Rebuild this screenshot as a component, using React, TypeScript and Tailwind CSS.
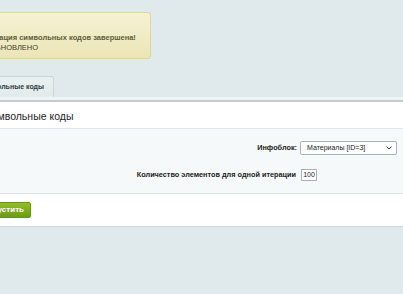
import React from "react";

export default function App() {
  return (
    <div
      className="w-[403px] h-[294px] overflow-hidden bg-[#e0e9eb] flex flex-col"
      style={{ fontFamily: '"Liberation Sans", Arial, sans-serif' }}
    >
      {/* message */}
      <div className="pt-[12px] flex">
        <div className="-ml-[30px] w-[181px] h-[47px] rounded-[3px] border border-[#dcd6a4] bg-gradient-to-b from-[#f5f2d3] to-[#ebe5b6] pt-[20px] overflow-hidden">
          <div className="ml-[7px] whitespace-nowrap text-[7.5px] leading-[10px] font-bold text-[#5f5c3a]">
            Генерация символьных кодов завершена!
          </div>
          <div className="ml-[19px] whitespace-nowrap text-[7.5px] leading-[10px] text-[#3f3d2a]">
            ОБНОВЛЕНО
          </div>
        </div>
      </div>

      {/* tabs */}
      <div className="mt-[17px] flex h-[21px]">
        <div className="-ml-[30px] w-[84px] h-[21px] border-r border-t border-[#cbd4d7] rounded-tr-[3px] bg-gradient-to-b from-[#e9f0f1] to-[#e3eaec] flex items-center justify-end pr-[9px]">
          <span className="whitespace-nowrap text-[7px] font-bold text-[#2f3b42]">
            Символьные коды
          </span>
        </div>
      </div>
      <div className="h-[3px] bg-[#eef3f4]" />
      <div className="h-[2px] bg-[#c3cbce]" />

      {/* panel */}
      <div className="bg-white h-[27px] flex items-center pt-[3px] border-b border-[#dfe6e8]">
        <span className="-ml-[16px] whitespace-nowrap text-[10.5px] text-[#1f2426]">
          Символьные коды
        </span>
      </div>
      <div className="bg-[#f5f9f9] h-[65px] border-b border-[#dce3e6] flex flex-col items-end pr-[6px] pt-[12px] gap-[14px]">
        <div className="flex items-center gap-[3px]">
          <span className="text-[7.3px] font-bold text-[#222]">Инфоблок:</span>
          <div className="w-[97px] h-[14px] border border-[#a9b3b6] rounded-[2px] bg-white flex items-center justify-between pl-[6px] pr-[4px]">
            <span className="text-[7px] text-[#222] whitespace-nowrap">Материалы [ID=3]</span>
            <svg width="6" height="4" viewBox="0 0 6 4">
              <path d="M0.5 0.5 L3 3 L5.5 0.5" fill="none" stroke="#333" strokeWidth="1" />
            </svg>
          </div>
        </div>
        <div className="flex items-center gap-[5px] pr-[80px]">
          <span className="text-[7.3px] font-bold text-[#222] whitespace-nowrap">
            Количество элементов для одной итерации
          </span>
          <div className="w-[16px] h-[12px] border border-[#a9b3b6] bg-white flex items-center justify-center">
            <span className="text-[7px] text-[#222]">100</span>
          </div>
        </div>
      </div>
      <div className="bg-white h-[33px] flex items-center border-b border-[#cfd8db]">
        <div className="-ml-[20px] w-[51px] h-[16px] rounded-[2px] bg-gradient-to-b from-[#93bd2e] to-[#6b9b14] border border-[#6a9418] flex items-center justify-end pr-[6px]">
          <span className="text-[8px] font-bold text-white whitespace-nowrap">Запустить</span>
        </div>
      </div>
    </div>
  );
}
